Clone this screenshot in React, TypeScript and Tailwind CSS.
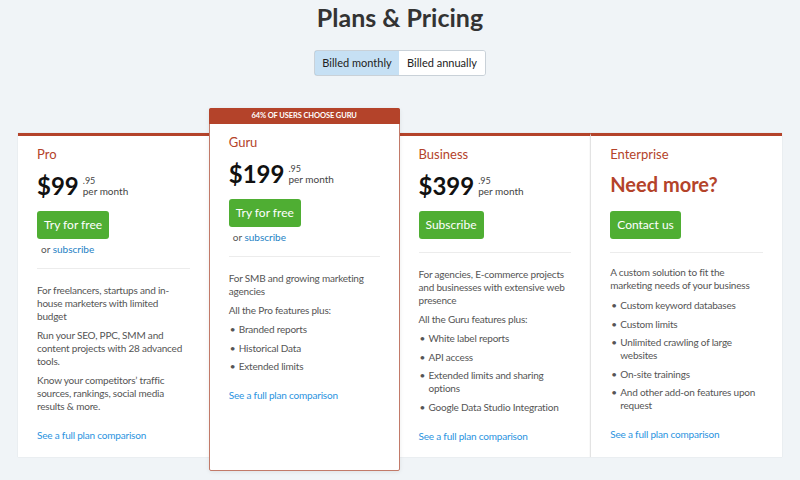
import React from 'react';

const RED = 'text-[#b4432a]';

type Plan = {
  name: string;
  price?: string;
  cta: string;
  subscribe?: boolean;
  intro: string[];
  lead?: string;
  bullets?: string[];
};

const plans: Plan[] = [
  {
    name: 'Pro',
    price: '$99',
    cta: 'Try for free',
    subscribe: true,
    intro: [
      'For freelancers, startups and in-house marketers with limited budget',
      'Run your SEO, PPC, SMM and content projects with 28 advanced tools.',
      'Know your competitors’ traffic sources, rankings, social media results & more.',
    ],
  },
  {
    name: 'Guru',
    price: '$199',
    cta: 'Try for free',
    subscribe: true,
    intro: ['For SMB and growing marketing agencies'],
    lead: 'All the Pro features plus:',
    bullets: ['Branded reports', 'Historical Data', 'Extended limits'],
  },
  {
    name: 'Business',
    price: '$399',
    cta: 'Subscribe',
    intro: ['For agencies, E-commerce projects and businesses with extensive web presence'],
    lead: 'All the Guru features plus:',
    bullets: ['White label reports', 'API access', 'Extended limits and sharing options', 'Google Data Studio Integration'],
  },
  {
    name: 'Enterprise',
    cta: 'Contact us',
    intro: ['A custom solution to fit the marketing needs of your business'],
    bullets: [
      'Custom keyword databases',
      'Custom limits',
      'Unlimited crawling of large websites',
      'On-site trainings',
      'And other add-on features upon request',
    ],
  },
];

const PlanBody: React.FC<{ plan: Plan }> = ({ plan }) => (
  <div className="px-[19px] pt-[10px] pb-[12px] flex flex-col h-full">
    <h3 className={`text-[13px] leading-[16px] ${RED}`}>{plan.name}</h3>
    {plan.price ? (
      <div className="flex items-center mt-[10px] h-[28px]">
        <span className="text-[24px] leading-[28px] font-bold text-[#111]">{plan.price}</span>
        <span className="ml-[4px] flex flex-col text-[#444] text-[9px] leading-[10px] -mt-[1px]">
          <span>.95</span>
          <span className="text-[10px]">per month</span>
        </span>
      </div>
    ) : (
      <div className={`mt-[8px] h-[28px] text-[20px] leading-[28px] font-bold ${RED}`}>Need more?</div>
    )}
    <div className={plan.price ? 'mt-[11px]' : 'mt-[13px]'}>
      <button className="h-[28px] px-[7px] rounded-[3px] bg-[#4fae33] text-white text-[12px] leading-[28px]">
        {plan.cta}
      </button>
    </div>
    {plan.subscribe && (
      <p className="mt-[4px] text-[10px] leading-[13px] text-[#555] pl-[4px]">
        or <span className="text-[#1d7fc4]">subscribe</span>
      </p>
    )}
    <div className={`${plan.subscribe ? 'mt-[12px]' : 'mt-[13px]'} border-t border-[#ececec]`} />
    <div
      className={`${plan.price ? 'mt-[15px]' : 'mt-[13px]'} text-[10px] leading-[13px] tracking-[-0.2px] text-[#555] flex-1 flex flex-col gap-[6px]`}
    >
      {plan.intro.map((t) => (
        <p key={t}>{t}</p>
      ))}
      {plan.lead && <p>{plan.lead}</p>}
      {plan.bullets && (
        <ul className={`flex flex-col gap-[5.5px] ${plan.lead ? '' : 'mt-[1px]'}`}>
          {plan.bullets.map((b) => (
            <li key={b} className="flex">
              <span className="w-[10px] shrink-0 pl-[1px]">•</span>
              <span>{b}</span>
            </li>
          ))}
        </ul>
      )}
      <p className="mt-[10px] text-[#2a93e0]">See a full plan comparison</p>
    </div>
  </div>
);

export default function App() {
  return (
    <div
      className="w-[800px] h-[480px] bg-[#f0f4f7] overflow-hidden"
      style={{ fontFamily: 'Lato, "Noto Sans", sans-serif' }}
    >
      <h1 className="text-center text-[25px] leading-[34px] font-bold text-[#333]">Plans &amp; Pricing</h1>
      <div className="flex justify-center mt-[16px]">
        <div className="flex h-[26px] text-[11px] text-[#222] rounded-[3px] overflow-hidden border border-[#c9d1d8]">
          <button className="w-[86px] bg-[#c6e0f4] border border-[#6fb2e4] rounded-l-[3px] -m-px">Billed monthly</button>
          <button className="w-[86px] bg-white">Billed annually</button>
        </div>
      </div>
      <div className="mx-[18px] mt-[57px] flex h-[324px] items-stretch">
        <div className="w-[191px] bg-white border-t-[3px] border-[#b4432a] shadow-[0_0_1px_rgba(0,0,0,0.15)]">
          <PlanBody plan={plans[0]} />
        </div>
        <div className="w-[191px] -mt-[25px] -mb-[14px] bg-white border border-[#c27a69] rounded-[2px] shadow-[0_1px_4px_rgba(0,0,0,0.08)] flex flex-col relative z-10">
          <div className="h-[16px] bg-[#b4432a] text-white text-[7.5px] tracking-[-0.1px] font-bold leading-[16px] text-center -mx-px -mt-px rounded-t-[2px]">
            64% OF USERS CHOOSE GURU
          </div>
          <PlanBody plan={plans[1]} />
        </div>
        <div className="w-[191px] bg-white border-t-[3px] border-[#b4432a] shadow-[0_0_1px_rgba(0,0,0,0.15)]">
          <PlanBody plan={plans[2]} />
        </div>
        <div className="w-[192px] bg-white border-t-[3px] border-t-[#b4432a] border-l border-l-[#e3e3e3] shadow-[0_0_1px_rgba(0,0,0,0.15)]">
          <PlanBody plan={plans[3]} />
        </div>
      </div>
    </div>
  );
}
